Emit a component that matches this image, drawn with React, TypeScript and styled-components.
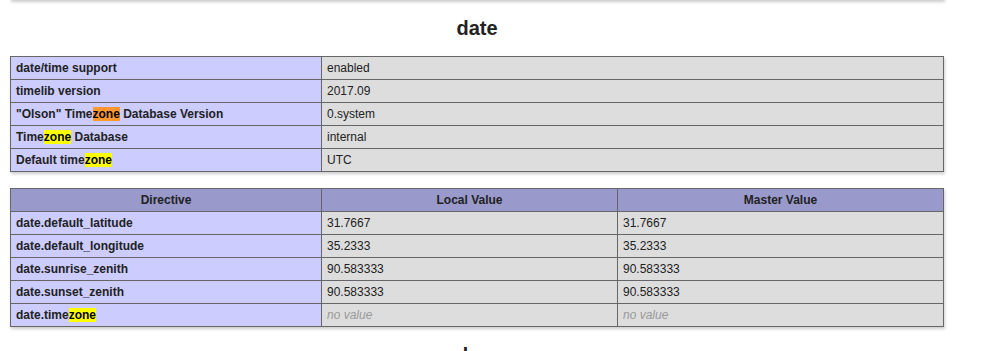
import styled, { createGlobalStyle } from 'styled-components'

const GlobalStyle = createGlobalStyle`
  html, body {
    margin: 0;
    padding: 0;
    background: #fff;
  }
  body {
    color: #222;
    font-family: "Liberation Sans", Arial, sans-serif;
  }
`

type InfoRow = {
  label: React.ReactNode;
  value: string;
}

type DirectiveRow = {
  name: React.ReactNode;
  local: string | null;
  master: string | null;
}

export default function App() {

  const infoRows: InfoRow[] = [
    { label: "date/time support", value: "enabled" },
    { label: "timelib version", value: "2017.09" },
    { label: <>"Olson" Time<Mark active>zone</Mark> Database Version</>, value: "0.system" },
    { label: <>Time<Mark>zone</Mark> Database</>, value: "internal" },
    { label: <>Default time<Mark>zone</Mark></>, value: "UTC" },
  ]

  const directives: DirectiveRow[] = [
    { name: "date.default_latitude", local: "31.7667", master: "31.7667" },
    { name: "date.default_longitude", local: "35.2333", master: "35.2333" },
    { name: "date.sunrise_zenith", local: "90.583333", master: "90.583333" },
    { name: "date.sunset_zenith", local: "90.583333", master: "90.583333" },
    { name: <>date.time<Mark>zone</Mark></>, local: null, master: null },
  ]

  return (
    <Page>
      <GlobalStyle />
      <PrevTableTail />
      <ModuleTitle>date</ModuleTitle>
      <InfoTable>
        <tbody>
          {infoRows.map((row, index) => (
            <tr key={index}>
              <KeyCell>{row.label}</KeyCell>
              <ValueCell>{row.value}</ValueCell>
            </tr>
          ))}
        </tbody>
      </InfoTable>
      <InfoTable>
        <tbody>
          <tr>
            <HeadCell width={300}>Directive</HeadCell>
            <HeadCell width={285}>Local Value</HeadCell>
            <HeadCell>Master Value</HeadCell>
          </tr>
          {directives.map((row, index) => (
            <tr key={index}>
              <KeyCell>{row.name}</KeyCell>
              <ValueCell>{row.local ?? <NoValue>no value</NoValue>}</ValueCell>
              <ValueCell>{row.master ?? <NoValue>no value</NoValue>}</ValueCell>
            </tr>
          ))}
        </tbody>
      </InfoTable>
      <ModuleTitle>dom</ModuleTitle>
    </Page>
  )
}

const Page = styled.div`
  width: 934px;
  padding-left: 10px;
`

const PrevTableTail = styled.div`
  height: 20px;
  margin-top: -21px;
  background: #ddd;
  border-bottom: 1px solid #666;
  box-shadow: 1px 2px 3px #ccc;
`

const ModuleTitle = styled.h2`
  margin: 17px 0 16px;
  font-size: 20px;
  line-height: 23px;
  font-weight: bold;
  text-align: center;
  color: #222;
`

const InfoTable = styled.table`
  width: 934px;
  border-collapse: collapse;
  border: 0;
  margin-bottom: 16px;
  box-shadow: 1px 2px 3px #ccc;

  td, th {
    border: 1px solid #666;
    font-size: 12px;
    line-height: 14px;
    padding: 4px 5px;
    vertical-align: baseline;
    text-align: left;
  }
`

const HeadCell = styled.th<{ width?: number }>`
  background-color: #99c;
  font-weight: bold;
  color: #222;
  && { text-align: center; }
  width: ${({ width }) => width ? `${width}px` : 'auto'};
`

const KeyCell = styled.td`
  background-color: #ccf;
  width: 300px;
  font-weight: bold;
`

const ValueCell = styled.td`
  background-color: #ddd;
  max-width: 300px;
  overflow-x: auto;
  word-wrap: break-word;
`

const NoValue = styled.i`
  color: #999;
`

const Mark = styled.span<{ active?: boolean }>`
  background-color: ${({ active }) => active ? '#ff9632' : '#ffff00'};
  color: #000;
`
